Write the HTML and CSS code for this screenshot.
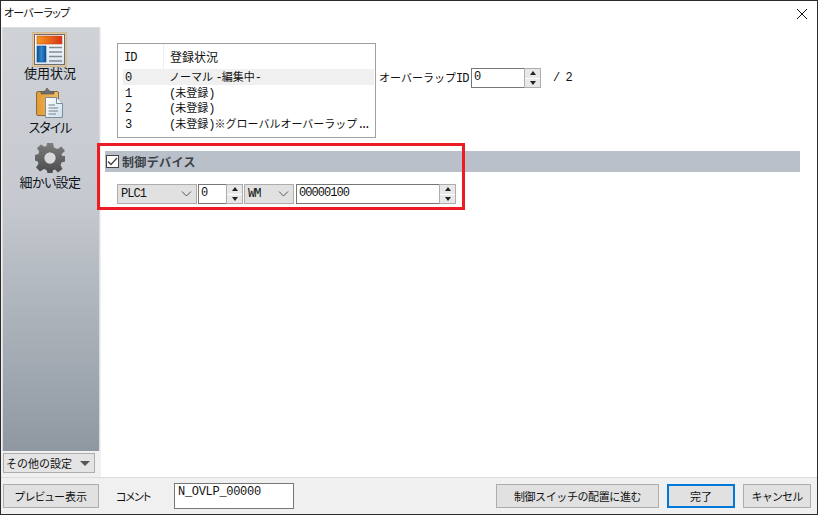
FILE: index.html
```html
<!DOCTYPE html>
<html lang="ja">
<head>
<meta charset="utf-8">
<title>オーバーラップ</title>
<link rel="stylesheet" href="styles.css">
</head>
<body>
<div class="window">
  <header class="titlebar">
    <span class="title">オーバーラップ</span>
    <svg class="close" width="12" height="12" viewBox="0 0 12 12"><path d="M1 1L11 11M11 1L1 11" stroke="#111" stroke-width="1" fill="none"/></svg>
  </header>
  <div class="main">
    <aside class="leftcol">
      <nav class="sidebar">
        <div class="navitem first">
          <svg class="icon" width="35" height="35" viewBox="0 0 35 35">
            <defs>
              <linearGradient id="og" x1="0" x2="1" y1="0" y2="0"><stop offset="0" stop-color="#f59a1e"/><stop offset="1" stop-color="#d8321a"/></linearGradient>
              <linearGradient id="bg" x1="0" x2="1" y1="0" y2="0"><stop offset="0" stop-color="#0f4f96"/><stop offset="0.5" stop-color="#2f86cc"/><stop offset="1" stop-color="#0f4f96"/></linearGradient>
              <linearGradient id="pg" x1="0" x2="0" y1="0" y2="1"><stop offset="0" stop-color="#ffffff"/><stop offset="1" stop-color="#d9e6f2"/></linearGradient>
            </defs>
            <rect x="0.5" y="0.5" width="34" height="34" fill="#dcc7a6" stroke="#d8b78c"/>
            <rect x="2.5" y="2.5" width="30" height="30" fill="url(#pg)" stroke="#6d6d6d"/>
            <rect x="5" y="4" width="25" height="8" fill="url(#og)" stroke="#c24b1c" stroke-width=".6"/>
            <rect x="5" y="14" width="9" height="16" fill="url(#bg)" stroke="#174f8c" stroke-width=".6"/>
            <path d="M17 15.5H30M17 20H30M17 24.500H30M17 29H30" stroke="#858b8f" stroke-width="1.4"/>
          </svg>
          <span class="navlabel">使用状況</span>
        </div>
        <div class="navitem second">
          <svg class="icon" width="28" height="32" viewBox="0 0 28 32">
            <defs>
              <linearGradient id="cb" x1="0" x2="1" y1="0" y2="0"><stop offset="0" stop-color="#e29a33"/><stop offset="1" stop-color="#f2bd66"/></linearGradient>
              <linearGradient id="sh" x1="0" x2="1" y1="0" y2="1"><stop offset="0" stop-color="#ffffff"/><stop offset="1" stop-color="#c9e0ef"/></linearGradient>
            </defs>
            <rect x="0.500" y="4.500" width="22" height="24" rx="1.500" fill="url(#cb)" stroke="#8a6a3c"/>
            <path d="M5 7V4.500H8.500L11 1L14 4.500H18V7Z" fill="#6f6f6f" stroke="#555" stroke-width=".6"/>
            <path d="M9.500 10.500H20.500L26.500 16.500V30.500H9.500Z" fill="url(#sh)" stroke="#7f8d96"/>
            <path d="M20.500 10.500V16.500H26.500" fill="#eef5fa" stroke="#7f8d96"/>
            <path d="M12.500 18H19M12.500 21H22M12.500 24H22M12.500 27H20" stroke="#7a7f84" stroke-width="1.200"/>
          </svg>
          <span class="navlabel">スタイル</span>
        </div>
        <div class="navitem third">
          <svg class="icon" width="30" height="30" viewBox="0 0 30 30">
            <defs><linearGradient id="gr" x1="0" x2="0" y1="0" y2="1"><stop offset="0" stop-color="#7d7d7d"/><stop offset="1" stop-color="#4c4c4c"/></linearGradient></defs>
            <path fill="url(#gr)" fill-rule="evenodd" d="M12 0H18L19 4.500L22.500 6L26.500 3.500L30 8L26.500 11L27.300 13H30V18.500L26.500 19.500L25.500 22L27.500 26L23 29.500L20 26.500L18 27.300L17.500 30H12.500L11.500 27L9 26L5 28.500L1 24.500L3.500 20.500L2.700 18.500L0 17.500V12L3.300 11L4.200 8.800L2 5L6 1.500L9.500 3.800L11.500 3ZM15 9.500A5.500 5.500 0 1 0 15 20.500A5.500 5.500 0 1 0 15 9.500Z"/>
            <circle cx="15" cy="15" r="5.500" fill="#d6d8da"/>
          </svg>
          <span class="navlabel">細かい設定</span>
        </div>
      </nav>
      <button class="moresettings"><span>その他の設定</span><i class="tri"></i></button>
    </aside>
    <section class="content">
      <div class="toprow">
        <div class="list">
          <div class="listhead">
            <span class="col-id"><span class="lat">ID</span></span>
            <span class="col-state headstate">登録状況</span>
          </div>
          <div class="listrow selected"><span class="col-id"><span class="lat">0</span></span><span class="col-state">ノーマル <span class="lat">-</span>編集中<span class="lat">-</span></span></div>
          <div class="listrow"><span class="col-id"><span class="lat">1</span></span><span class="col-state"><span class="lat">(</span>未登録<span class="lat">)</span></span></div>
          <div class="listrow"><span class="col-id"><span class="lat">2</span></span><span class="col-state"><span class="lat">(</span>未登録<span class="lat">)</span></span></div>
          <div class="listrow"><span class="col-id"><span class="lat">3</span></span><span class="col-state"><span class="lat">(</span>未登録<span class="lat">)</span>※グローバルオーバーラップ<span class="lat dots">...</span></span></div>
        </div>
        <div class="idgroup">
          <span class="idlabel">オーバーラップ<span class="lat">ID</span></span>
          <div class="spinfield w-id">
            <span class="field lat grow">0</span>
            <span class="spin"><b class="up"></b><b class="down"></b></span>
          </div>
          <span class="idmax lat">/ 2</span>
        </div>
      </div>
      <div class="sectionhead">
        <span class="checkbox"><svg width="11" height="9" viewBox="0 0 11 9"><path d="M1 4.500L4 7.500L10 1" stroke="#444" stroke-width="1.300" fill="none"/></svg></span>
        <span class="sectiontitle">制御デバイス</span>
      </div>
      <div class="controls">
        <div class="select w-plc"><span class="lat">PLC1</span><svg width="11" height="6" viewBox="0 0 11 6"><path d="M1 0.500L5.500 5L10 0.500" stroke="#555" fill="none"/></svg></div>
        <div class="spinfield w-num">
          <span class="field lat grow">0</span>
          <span class="spin"><b class="up"></b><b class="down"></b></span>
        </div>
        <div class="select w-wm"><span class="lat">WM</span><svg width="11" height="6" viewBox="0 0 11 6"><path d="M1 0.500L5.500 5L10 0.500" stroke="#555" fill="none"/></svg></div>
        <div class="spinfield w-addr">
          <span class="field lat grow">00000100</span>
          <span class="spin"><b class="up"></b><b class="down"></b></span>
        </div>
      </div>
    </section>
  </div>
  <footer class="footer">
    <button class="btn b-preview">プレビュー表示</button>
    <span class="commentlabel">コメント</span>
    <span class="commentinput lat">N_OVLP_00000</span>
    <span class="spacer"></span>
    <button class="btn b-next">制御スイッチの配置に進む</button>
    <button class="btn b-done">完了</button>
    <button class="btn b-cancel">キャンセル</button>
  </footer>
  <div class="callout"></div>
</div>
</body>
</html>
```
FILE: styles.css
```css
* { box-sizing: border-box; }
html, body { margin: 0; padding: 0; background: #fff; }
body {
  font-family: "Noto Sans CJK JP", sans-serif;
  font-size: 11px;
  color: #111;
  line-height: 16px;
}
.lat { font-family: "Liberation Mono", monospace; font-size: 12px; letter-spacing: -0.95px; font-weight: 400; }
.dots { letter-spacing: -4px; }
.window {
  position: relative;
  width: 818px;
  height: 515px;
  border: 1px solid #2b2b2b;
  background: #f0f0f0;
  display: flex;
  flex-direction: column;
  overflow: hidden;
}
.titlebar {
  height: 26px;
  background: #fff;
  display: flex;
  align-items: center;
  justify-content: space-between;
  padding: 0 4px 5px 3px;
  flex: none;
}
.title { font-size: 11px; letter-spacing: -0.7px; font-feature-settings: "palt"; }
.close { margin-right: 5px; margin-top: 4px; }
.main {
  flex: none;
  height: 451px;
  display: flex;
  border-bottom: 1px solid #dcdcdc;
}
.leftcol {
  width: 100px;
  flex: none;
  padding: 0 0 0 1px;
  display: flex;
  flex-direction: column;
}
.sidebar {
  width: 98px;
  height: 424px;
  border: 1px solid #dddddd;
  border-bottom: 0;
  padding-right: 2px;
  background: linear-gradient(#cfd2d7 0%, #c6cad0 40%, #8f98a2 100%);
  display: flex;
  flex-direction: column;
  align-items: center;
  flex: none;
}
.navitem { display: flex; flex-direction: column; align-items: center; }
.navitem.first { margin-top: 4px; }
.navitem.second { margin-top: 7px; }
.navitem.third { margin-top: 9px; }
.icon { display: block; }
.navlabel { font-size: 13px; line-height: 14px; color: #10131a; font-feature-settings: "palt"; }
.first .navlabel { margin-top: -1px; }
.second .navlabel { margin-top: 1px; letter-spacing: -1px; }
.third .navlabel { margin-top: 2px; letter-spacing: -0.6px; }
.moresettings {
  margin: 2px 0 0 1px;
  width: 92px;
  height: 20px;
  border: 1px solid #adadad;
  background: #e4e4e4;
  font: 11px/16px "Noto Sans CJK JP", sans-serif;
  white-space: nowrap;
  color: #111;
  padding: 0 4px 0 2px;
  display: flex;
  align-items: center;
  justify-content: space-between;
}
.tri {
  width: 0; height: 0;
  border-left: 5px solid transparent;
  border-right: 5px solid transparent;
  border-top: 5px solid #555;
}
.content {
  flex: 1;
  background: #fff;
  padding: 16px 0 0 4px;
}
.toprow { display: flex; align-items: flex-start; margin-left: 12px; }
.list {
  width: 259px;
  height: 95px;
  border: 1px solid #a0a0a0;
  padding: 0 1px 0 5px;
  background: #fff;
  flex: none;
}
.listhead { display: flex; height: 25px; align-items: center; }
.listrow { display: flex; height: 15.600px; align-items: center; white-space: nowrap; }
.listrow.selected { background: #f0f0f0; height: 16px; }
.col-id { width: 40px; padding-left: 2px; flex: none; }
.listrow .col-state { margin-left: 6px; }
.headstate { border-left: 1px solid #eeeeee; height: 25px; line-height: 25px; padding-left: 6px; font-size: 12px; }
.listhead .col-id { padding-left: 1px; }
.idgroup { display: flex; align-items: center; margin: 25px 0 0 3px; height: 20px; }
.idlabel { width: 92px; white-space: nowrap; }
.spinfield { display: flex; height: 20px; flex: none; }
.field {
  border: 1px solid #767676;
  border-right: 0;
  background: #fff;
  padding: 0 0 0 2px;
  line-height: 16px;
  min-width: 0;
}
.grow { flex: 1; }
.spin {
  width: 17px;
  flex: none;
  border: 1px solid #adadad;
  display: flex;
  flex-direction: column;
  background: #fff;
}
.spin b {
  flex: 1;
  background: #e8e8e8;
  display: flex;
  align-items: center;
  justify-content: center;
}
.spin b + b { border-top: 1px solid #fff; }
.up::before, .down::before {
  content: "";
  width: 0; height: 0;
  border-left: 3.500px solid transparent;
  border-right: 3.500px solid transparent;
}
.up::before { border-bottom: 4px solid #222; }
.down::before { border-top: 4px solid #222; }
.w-id { width: 70px; }
.idmax { margin-left: 12px; }
.sectionhead {
  width: 695px;
  height: 21px;
  margin-top: 13px;
  background: #b9c0c9;
  display: flex;
  align-items: center;
  padding-left: 1px;
}
.checkbox {
  width: 13px;
  height: 13px;
  border: 1px solid #444;
  background: #fff;
  display: flex;
  align-items: center;
  justify-content: center;
}
.sectiontitle { margin-left: 3px; font-size: 12px; letter-spacing: 0.35px; font-weight: 700; color: #3c4046; }
.controls { display: flex; margin: 12px 0 0 12px; height: 20px; }
.select {
  height: 20px;
  background: #e1e1e1;
  border: 1px solid #adadad;
  display: flex;
  align-items: center;
  justify-content: space-between;
  padding: 0 4px 0 3px;
  flex: none;
}
.w-plc { width: 80px; margin-right: 1px; }
.w-num { width: 45px; margin-right: 1px; }
.w-wm { width: 50px; margin-right: 2px; }
.w-addr { width: 160px; }
.footer {
  flex: 1;
  display: flex;
  align-items: flex-start;
  padding: 6px 6px 0 2px;
}
.btn {
  height: 24px;
  background: #e1e1e1;
  border: 1px solid #adadad;
  font: 11px/16px "Noto Sans CJK JP", sans-serif;
  letter-spacing: -0.4px;
  color: #111;
  padding: 0;
  flex: none;
}
.b-preview { width: 96px; font-feature-settings: "palt"; letter-spacing: 0; }
.commentlabel { margin-left: 17px; width: 58px; line-height: 24px; flex: none; font-size: 11px; letter-spacing: -1px; font-feature-settings: "palt"; }
.commentinput {
  width: 120px;
  height: 26px;
  margin-top: -1px;
  border: 1px solid #767676;
  background: #fff;
  padding: 0 0 0 3px;
  line-height: 16px;
  letter-spacing: -0.3px;
  flex: none;
}
.spacer { flex: 1; }
.b-next { width: 163px; }
.b-done { width: 68px; margin-left: 8px; border: 2px solid #0078d7; letter-spacing: 0; }
.b-cancel { width: 68px; margin-left: 8px; letter-spacing: -0.8px; }
.callout {
  position: absolute;
  left: 96px;
  top: 142px;
  width: 368px;
  height: 67px;
  border: 3px solid #ed1c24;
  pointer-events: none;
}
```
